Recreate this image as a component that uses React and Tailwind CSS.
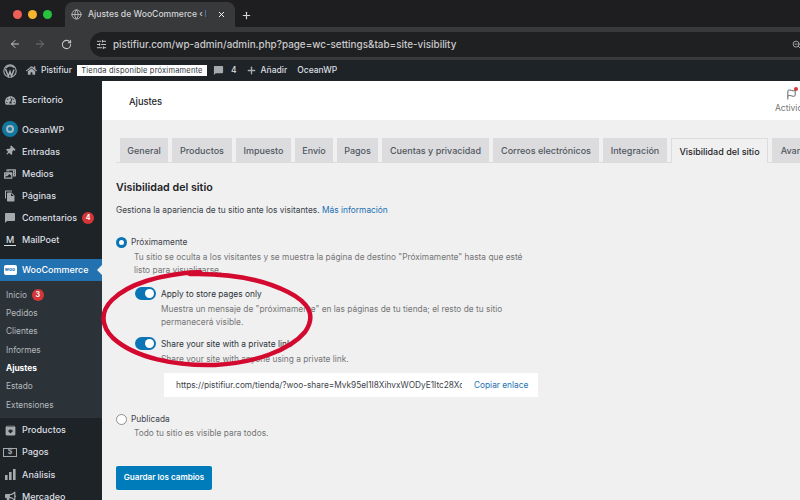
import React from 'react';
import { Globe, X, Plus, ArrowLeft, ArrowRight, RotateCw, SlidersHorizontal, ZoomOut, Flag } from 'lucide-react';
import { FaTachometerAlt, FaThumbtack, FaPhotoVideo, FaHome, FaBullhorn } from 'react-icons/fa';
import { MdChatBubble, MdFileCopy, MdArchive } from 'react-icons/md';

const font = { fontFamily: 'Inter, "Liberation Sans", sans-serif' };

const Badge = ({ n }) => (
  <span className="ml-[5px] flex h-[12px] w-[12px] items-center justify-center rounded-full bg-[#d63638] text-[7px] font-bold text-white">{n}</span>
);

const WpLogo = () => (
  <svg width="14" height="14" viewBox="0 0 14 14" fill="none" className="text-[#a7aaad]">
    <circle cx="7" cy="7" r="6.2" stroke="currentColor" strokeWidth="1.1" />
    <path d="M2.4 4.6 5.4 12.2 7 7.6 8.6 12.2 11 5.6" stroke="currentColor" strokeWidth="1.5" />
    <path d="M3 3.8C5 1.2 9 1 11.2 3.6" stroke="currentColor" strokeWidth="1.4" />
  </svg>
);

const Menu = ({ icon, label, badge, className = '' }) => (
  <div className={`flex h-[22.2px] items-center ${className}`}>
    <span className="flex w-[22px] shrink-0 justify-center pr-[2px] text-[#a7aaad]">{icon}</span>
    <span className="text-[9px] font-medium text-[#dcdfe1]">{label}</span>
    {badge && <Badge n={badge} />}
  </div>
);

const Sub = ({ label, badge, active }) => (
  <div className={`flex h-[18.3px] items-center pl-[6px] text-[8.3px] ${active ? 'font-bold text-white' : 'text-[#b4b9be]'}`}>
    {label}
    {badge && <Badge n={badge} />}
  </div>
);

const tabs = [
  { label: 'General', w: 'w-[48px]' },
  { label: 'Productos', w: 'w-[60px]' },
  { label: 'Impuesto', w: 'w-[55px]' },
  { label: 'Envío', w: 'w-[38px]' },
  { label: 'Pagos', w: 'w-[41px]' },
  { label: 'Cuentas y privacidad', w: 'w-[107px]' },
  { label: 'Correos electrónicos', w: 'w-[106px]' },
  { label: 'Integración', w: 'w-[64px]' },
  { label: 'Visibilidad del sitio', w: 'w-[97px]', active: true },
  { label: 'Avanzado', w: 'w-[60px]' },
];

const Toggle = () => (
  <span className="flex h-[13px] w-[21px] shrink-0 items-center justify-end rounded-full bg-[#0b74b5] pr-[2px]">
    <span className="h-[9px] w-[9px] rounded-full bg-white" />
  </span>
);

export default function App() {
  return (
    <div className="relative flex h-[500px] w-[800px] flex-col overflow-hidden bg-[#f0f0f1]" style={font}>
      {/* browser tabs */}
      <div className="flex h-[27px] shrink-0 items-end bg-[#1e1e20]">
        <div className="flex h-[25px] items-center pl-[13px]">
          <span className="h-[9px] w-[9px] rounded-full bg-[#ee5f57]" />
          <span className="ml-[6px] h-[9px] w-[9px] rounded-full bg-[#f5b62e]" />
          <span className="ml-[6px] h-[9px] w-[9px] rounded-full bg-[#27c33f]" />
        </div>
        <div className="ml-[13px] flex h-[25px] w-[170px] items-center rounded-t-lg bg-[#38393b] pl-[6px] text-[#d4d5d7]">
          <Globe size={11} className="text-[#b8babd]" />
          <span className="ml-[6px] w-[118px] overflow-hidden whitespace-nowrap text-[8.6px] font-medium">Ajustes de WooCommerce ‹ Pistifiur</span>
          <X size={9} className="ml-[11px] text-white" strokeWidth={2.5} />
        </div>
        <Plus size={11} className="mb-[6px] ml-[6px] text-[#d4d5d7]" strokeWidth={2.5} />
      </div>

      {/* browser toolbar */}
      <div className="flex h-[33px] shrink-0 items-center bg-[#38393b] pl-[9px] pt-[1px] text-[#c6c7c9]">
        <ArrowLeft size={12} strokeWidth={2} />
        <ArrowRight size={12} strokeWidth={2} className="ml-[13px] text-[#747577]" />
        <RotateCw size={11} strokeWidth={2.2} className="ml-[15px]" />
        <div className="ml-[18px] flex h-[25px] flex-1 items-center rounded-l-full bg-[#1f2022] pl-[6px]">
          <SlidersHorizontal size={11} className="text-[#d0d1d3]" />
          <span className="ml-[6px] text-[9.9px] font-medium text-[#c9cacc]">pistifiur.com/wp-admin/admin.php?page=wc-settings&amp;tab=site-visibility</span>
          <ZoomOut size={9} className="ml-auto mr-[-1px] text-[#c9cacc]" />
        </div>
      </div>

      {/* wp admin bar */}
      <div className="flex h-[21px] shrink-0 items-center bg-[#1d2327] pl-[3px] text-[8.5px] font-medium text-[#dcdfe1]">
        <WpLogo />
        <FaHome size={11} className="ml-[9px] text-[#a7aaad]" />
        <span className="ml-[4px]">Pistifiur</span>
        <span className="ml-[5px] flex h-[11px] w-[130px] items-center justify-center bg-white text-[7.5px] font-normal tracking-[0.2px] text-[#2c3338]">Tienda disponible próximamente</span>
        <MdChatBubble size={11} className="ml-[6px] text-[#a7aaad]" />
        <span className="ml-[7px]">4</span>
        <Plus size={11} className="ml-[9px] text-[#a7aaad]" strokeWidth={3} />
        <span className="ml-[4px]">Añadir</span>
        <span className="ml-[10px]">OceanWP</span>
      </div>

      <div className="flex min-h-0 flex-1">
        {/* sidebar */}
        <aside className="w-[102px] shrink-0 bg-[#1d2327] pt-[8px]">
          <Menu icon={<FaTachometerAlt size={11} />} label="Escritorio" />
          <div className="h-[7px]" />
          <Menu
            icon={<span className="flex h-[16px] w-[16px] items-center justify-center rounded-full bg-[#11779e]"><span className="h-[8px] w-[8px] rounded-full border-2 border-[#a9b8c0]" /></span>}
            label="OceanWP"
          />
          <Menu icon={<FaThumbtack size={10} className="rotate-45" />} label="Entradas" />
          <Menu icon={<FaPhotoVideo size={12} />} label="Medios" />
          <Menu icon={<MdFileCopy size={12} />} label="Páginas" />
          <Menu icon={<MdChatBubble size={12} />} label="Comentarios" badge="4" />
          <Menu
            icon={<span className="border-b border-[#dcdfe1] px-[2px] text-[9px] font-medium leading-[11px] text-[#dcdfe1]">M</span>}
            label="MailPoet"
          />
          <div className="h-[7.6px]" />
          <div className="relative flex h-[22px] items-center bg-[#2271b1]">
            <span className="flex w-[22px] justify-center pr-[2px]">
              <span className="flex h-[10px] w-[13px] items-center justify-center rounded-[2px] bg-white text-[5px] font-bold text-[#2271b1]">woo</span>
            </span>
            <span className="text-[9px] font-medium text-white">WooCommerce</span>
            <span className="absolute right-0 top-[6px] h-0 w-0 border-y-[5px] border-r-[5px] border-y-transparent border-r-[#f0f0f1]" />
          </div>
          <div className="h-[137px] bg-[#2c3338] pt-[5px]">
            <Sub label="Inicio" badge="3" />
            <Sub label="Pedidos" />
            <Sub label="Clientes" />
            <Sub label="Informes" />
            <Sub label="Ajustes" active />
            <Sub label="Estado" />
            <Sub label="Extensiones" />
          </div>
          <Menu className="mt-[1px]" icon={<MdArchive size={13} />} label="Productos" />
          <Menu icon={<span className="flex h-[9px] w-[14px] items-center justify-center border border-[#a7aaad] text-[7px] font-bold">$</span>} label="Pagos" />
          <Menu
            icon={
              <svg width="11" height="11" viewBox="0 0 11 11" fill="currentColor">
                <rect x="0" y="6" width="2.6" height="5" />
                <rect x="4" y="3" width="2.6" height="8" />
                <rect x="8" y="0" width="2.6" height="11" />
              </svg>
            }
            label="Análisis"
          />
          <Menu icon={<FaBullhorn size={11} />} label="Mercadeo" />
        </aside>

        <main className="min-w-0 flex-1 overflow-hidden">
          {/* page header */}
          <header className="flex h-[39px] items-center justify-between bg-white pl-[27px] text-[9.3px] font-medium text-[#1d2327]">
            <span className="pt-[3px]">Ajustes</span>
            <div className="relative mr-[-6px] flex w-[32px] flex-col items-center pt-[3px]">
              <Flag size={11} className="ml-[3px] text-[#50575e]" />
              <span className="absolute right-[8px] top-[1px] h-[4px] w-[4px] rounded-full bg-[#d63638]" />
              <span className="mt-[2px] self-start pl-[1px] text-[8.5px] font-normal text-[#757575]">Activid</span>
            </div>
          </header>

          <div className="pl-[14px] pt-[18px]">
            {/* tabs */}
            <div className="flex w-[800px] gap-[4px] border-b border-[#dcdcde] pl-[4px]">
              {tabs.map((t) => (
                <div
                  key={t.label}
                  className={`flex shrink-0 items-center justify-center pt-[1px] text-[9px] font-medium ${t.w} ${t.active ? 'mb-[-1px] h-[25px] border border-b-0 border-[#dcdcde] bg-[#f0f0f1] text-[#1d2327]' : 'h-[24px] bg-[#dcdcde] text-[#50575e]'}`}
                >
                  {t.label}
                </div>
              ))}
            </div>

            <h2 className="mt-[18px] text-[10.7px] font-semibold leading-[14px] text-[#1d2327]">Visibilidad del sitio</h2>
            <p className="mt-[9px] text-[8.35px] leading-[12px] text-[#3c434a]">
              Gestiona la apariencia de tu sitio ante los visitantes. <span className="text-[#2271b1]">Más información</span>
            </p>

            {/* coming soon option */}
            <div className="mt-[20px] flex items-center">
              <span className="h-[11px] w-[11px] rounded-full border-[3px] border-[#0b74b5] bg-white" />
              <span className="ml-[4px] text-[8.35px] leading-[12px] text-[#3c434a]">Próximamente</span>
            </div>
            <p className="ml-[18px] mt-[3px] w-[400px] text-[8.35px] leading-[12.5px] text-[#757575]">
              Tu sitio se oculta a los visitantes y se muestra la página de destino "Próximamente" hasta que esté listo para visualizarse.
            </p>

            <div className="ml-[19px] mt-[11px] flex items-center">
              <Toggle />
              <span className="ml-[5px] text-[8.35px] leading-[12px] text-[#2c3338]">Apply to store pages only</span>
            </div>
            <p className="ml-[45px] mt-[3px] w-[360px] text-[8.35px] leading-[13px] text-[#757575]">
              Muestra un mensaje de "próximamente" en las páginas de tu tienda; el resto de tu sitio permanecerá visible.
            </p>

            <div className="ml-[19px] mt-[8px] flex items-center">
              <Toggle />
              <span className="ml-[5px] text-[8.35px] leading-[12px] text-[#2c3338]">Share your site with a private link</span>
            </div>
            <p className="ml-[45px] mt-[3px] text-[8.35px] leading-[13px] text-[#757575]">Share your site with anyone using a private link.</p>

            <div className="ml-[48px] mt-[7px] flex h-[24px] w-[374px] items-center bg-white pl-[12px] text-[8.3px]">
              <span className="w-[286px] overflow-hidden whitespace-nowrap text-[#3c434a]">https://pistifiur.com/tienda/?woo-share=Mvk95eI1I8XihvxWODyE1Itc28XqZ</span>
              <span className="ml-[12px] text-[#2271b1]">Copiar enlace</span>
            </div>

            {/* published option */}
            <div className="mt-[16px] flex items-center">
              <span className="h-[11px] w-[11px] rounded-full border border-[#8c8f94] bg-white" />
              <span className="ml-[4px] text-[8.35px] leading-[12px] text-[#3c434a]">Publicada</span>
            </div>
            <p className="ml-[18px] mt-[2px] text-[8.35px] leading-[12.5px] text-[#757575]">Todo tu sitio es visible para todos.</p>

            <button className="mt-[26px] h-[24px] w-[96px] rounded-[2px] bg-[#007cba] text-[8.1px] font-semibold text-white">Guardar los cambios</button>
          </div>
        </main>
      </div>

      {/* red hand-drawn ellipse over the screenshot */}
      <svg className="pointer-events-none absolute left-0 top-0" width="800" height="500" viewBox="0 0 800 500" fill="none">
        <path
          d="M200 272C160 274 128 284 112 300C100 312 101 326 113 338C135 358 175 366 215 365C255 363 290 350 305 332C316 316 310 303 288 292C262 279 230 273 190 274"
          stroke="#d3092f"
          strokeWidth="4.5"
          strokeLinecap="round"
        />
      </svg>
    </div>
  );
}
